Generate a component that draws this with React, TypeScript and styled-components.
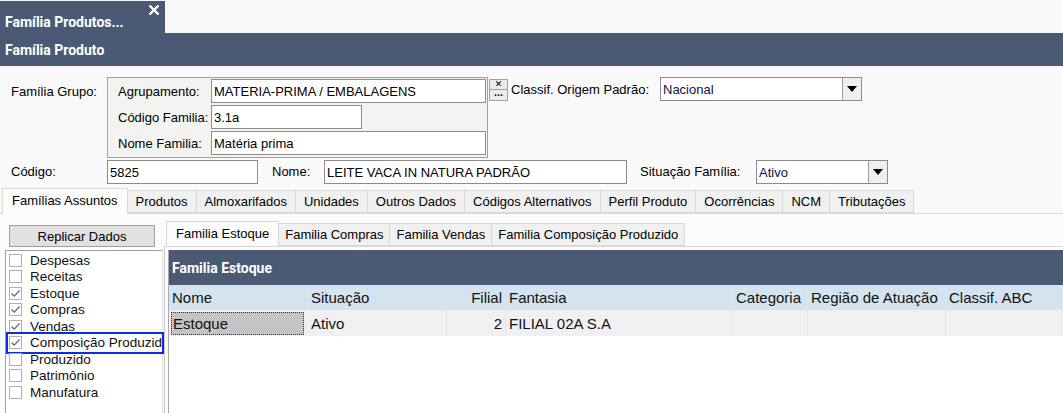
import styled, { createGlobalStyle } from 'styled-components';

const GlobalStyle = createGlobalStyle`
  body {
    margin: 0;
    background: #f9f9f9;
    font-family: 'Liberation Sans', Arial, sans-serif;
    font-size: 13px;
    color: #000;
  }
  * { box-sizing: border-box; }
`;

const DARK = '#4b5a74';

const Screen = styled.div`
  width: 1063px;
  height: 413px;
  overflow: hidden;
  display: flex;
  flex-direction: column;
`;

const DocTabs = styled.div`
  height: 33px;
  display: flex;
  align-items: flex-end;
`;

const DocTab = styled.div`
  width: 165px;
  height: 32px;
  display: flex;
  align-items: flex-start;
  padding: 0 4px 0 5px;
  background: ${DARK};
  color: #fff;
  font: 700 14px Roboto, 'Liberation Sans', sans-serif;
`;

const DocTabText = styled.span`
  margin-top: 13px;
`;

const CloseIcon = styled.svg`
  margin: 3px 1px 0 auto;
`;

const TitleBar = styled.div`
  height: 33px;
  display: flex;
  align-items: center;
  padding-left: 5px;
  background: ${DARK};
  color: #fff;
  font: 700 14px Roboto, 'Liberation Sans', sans-serif;
`;

const Form = styled.div`
  display: flex;
  flex-direction: column;
  gap: 2px;
  padding: 11px 0 0 11px;
`;

const Row = styled.div`
  display: flex;
  align-items: flex-start;
`;

const Label = styled.span<{ w: number; ml?: number; mt?: number }>`
  width: ${(p) => p.w}px;
  margin-left: ${(p) => p.ml ?? 0}px;
  margin-top: ${(p) => p.mt ?? 4}px;
  line-height: 15px;
  white-space: nowrap;
`;

const GroupBox = styled.div`
  width: 381px;
  display: grid;
  grid-template-columns: 93px auto;
  align-items: center;
  row-gap: 2px;
  padding: 1px 0 2px 10px;
  border: 1px solid #a0a0a0;
  background: #f3f3f1;
`;

const Input = styled.div<{ w: number }>`
  width: ${(p) => p.w}px;
  height: 24px;
  display: flex;
  align-items: center;
  padding-left: 2px;
  border: 1px solid #8c8c8c;
  background: #fff;
  white-space: nowrap;
  overflow: hidden;
`;

const MiniButtons = styled.div`
  display: flex;
  flex-direction: column;
  width: 19px;
  margin: 2px 0 0 1px;
`;

const MiniButton = styled.div`
  height: 11px;
  display: flex;
  align-items: center;
  justify-content: center;
  border: 1px solid #a0a0a0;
  background: #ececec;
  font: 700 9px 'DejaVu Sans', sans-serif;
  line-height: 1;
  & + & {
    border-top: none;
    height: 11px;
    align-items: flex-end;
    padding-bottom: 2px;
    font-size: 8px;
  }
`;

const Combo = styled.div<{ w: number }>`
  width: ${(p) => p.w}px;
  height: 24px;
  display: flex;
  border: 1px solid #8c8c8c;
  background: #fff;
`;

const ComboText = styled.span`
  flex: 1;
  padding: 4px 0 0 2px;
  color: #10104a;
`;

const ComboArrow = styled.span`
  width: 19px;
  display: flex;
  align-items: center;
  justify-content: center;
  border-left: 1px solid #a0a0a0;
  background: #f0f0f0;
  &::after {
    content: '';
    border-left: 5px solid transparent;
    border-right: 5px solid transparent;
    border-top: 6px solid #000;
  }
`;

const TabRow = styled.div`
  display: flex;
  align-items: flex-end;
  height: 30px;
  padding-left: 2px;
  border-bottom: 1px solid #d9d9d9;
`;

const Tab = styled.div<{ active?: boolean; pad?: number }>`
  height: ${(p) => (p.active ? 26 : 23)}px;
  display: flex;
  align-items: center;
  padding: ${(p) => (p.active ? '0 9px 2px' : `0 ${p.pad ?? 5}px`)};
  margin-bottom: ${(p) => (p.active ? -1 : 0)}px;
  border: 1px solid #d9d9d9;
  border-left: ${(p) => (p.active ? '1px solid #d9d9d9' : 'none')};
  border-bottom: ${(p) => (p.active ? 'none' : '1px solid #d9d9d9')};
  background: ${(p) => (p.active ? '#fcfcfc' : '#f0f0f0')};
  white-space: nowrap;
`;

const TabBody = styled.div`
  flex: 1;
  display: flex;
  background: #fcfcfc;
  padding-left: 5px;
`;

const LeftPanel = styled.div`
  width: 158px;
  display: flex;
  flex-direction: column;
`;

const Button = styled.div`
  width: 146px;
  height: 22px;
  margin: 11px 0 3px 4px;
  display: flex;
  align-items: center;
  justify-content: center;
  border: 1px solid #a0a0a0;
  background: #e1e1e1;
`;

const CheckList = styled.div`
  flex: 1;
  padding: 1px 0 0 3px;
  border-left: 1px solid #a0a0a0;
  border-top: 1px solid #a0a0a0;
  border-right: 1px solid #e3e3e3;
  background: #fff;
`;

const CheckItem = styled.div<{ focused?: boolean }>`
  position: relative;
  height: 16.5px;
  display: flex;
  align-items: center;
  gap: 8px;
  font-size: 13.5px;
  color: #111;
  white-space: nowrap;
  ${(p) =>
    p.focused &&
    `&::after {
      content: '';
      position: absolute;
      left: -3px;
      right: -2px;
      top: -3px;
      bottom: -3px;
      border: 2px solid #0a2fe0;
    }`}
`;

const Box = styled.span`
  width: 13px;
  height: 13px;
  display: flex;
  align-items: center;
  justify-content: center;
  border: 1px solid #b0b0b0;
  background: #fff;
`;

const RightPanel = styled.div`
  flex: 1;
  display: flex;
  flex-direction: column;
  padding: 6px 0 0 1px;
`;

const InnerTabRow = styled.div`
  display: flex;
  align-items: flex-end;
  height: 26px;
  padding-left: 2px;
`;

const InnerPage = styled.div`
  flex: 1;
  padding: 3px 0 0 3px;
  border-left: 1px solid #c8c8c8;
  border-top: 1px solid #d9d9d9;
`;

const Panel = styled.div`
  border-left: 1px solid #a9a9a9;
  height: 100%;
  background: #fff;
`;

const PanelHeader = styled.div`
  height: 35px;
  display: flex;
  align-items: center;
  padding-left: 3px;
  background: ${DARK};
  color: #fff;
  font: 700 14px Roboto, 'Liberation Sans', sans-serif;
`;

const GridRow = styled.div<{ head?: boolean }>`
  display: grid;
  grid-template-columns: 139px 139px 59px 227px 75px 138px 1fr;
  height: ${(p) => (p.head ? 25 : 26)}px;
  background: ${(p) => (p.head ? '#d4e3f0' : '#f0f0f2')};
  font-size: 15px;
  color: #111;
`;

const Cell = styled.div<{ right?: boolean; head?: boolean }>`
  display: flex;
  align-items: center;
  justify-content: ${(p) => (p.right ? 'flex-end' : 'flex-start')};
  padding: 0 3px;
  border-right: 1px solid ${(p) => (p.head ? '#dde7f1' : '#e8e8ea')};
  white-space: nowrap;
  overflow: hidden;
`;

const SelectedCell = styled(Cell)`
  margin: 2px 4px 1px 2px;
  padding-left: 1px;
  background: #c4c4c4;
  border: 1px dotted #333;
`;

const Check = () => (
  <svg width="11" height="11" viewBox="0 0 11 11">
    <polyline points="1.5,5.5 4.2,8.2 9.5,2.5" fill="none" stroke="#666" strokeWidth="1.2" />
  </svg>
);

const mainTabs = [
  'Produtos',
  'Almoxarifados',
  'Unidades',
  'Outros Dados',
  'Códigos Alternativos',
  'Perfil Produto',
  'Ocorrências',
  'NCM',
  'Tributações',
];

const innerTabs = ['Familia Compras', 'Familia Vendas', 'Familia Composição Produzido'];

const items: { label: string; checked?: boolean; focused?: boolean }[] = [
  { label: 'Despesas' },
  { label: 'Receitas' },
  { label: 'Estoque', checked: true },
  { label: 'Compras', checked: true },
  { label: 'Vendas', checked: true },
  { label: 'Composição Produzid', checked: true, focused: true },
  { label: 'Produzido' },
  { label: 'Patrimônio' },
  { label: 'Manufatura' },
];

export default function App() {
  return (
    <Screen>
      <GlobalStyle />
      <DocTabs>
        <DocTab>
          <DocTabText>Família Produtos...</DocTabText>
          <CloseIcon width="12" height="12" viewBox="0 0 12 12">
            <path d="M1.5 1.5 L10.5 10.5 M10.5 1.5 L1.5 10.5" stroke="#fff" strokeWidth="2.4" />
          </CloseIcon>
        </DocTab>
      </DocTabs>
      <TitleBar>Família Produto</TitleBar>

      <Form>
        <Row>
          <Label w={96} mt={7}>Família Grupo:</Label>
          <GroupBox>
            <Label w={93} mt={0}>Agrupamento:</Label>
            <Input w={275}>MATERIA-PRIMA / EMBALAGENS</Input>
            <Label w={93} mt={0}>Código Familia:</Label>
            <Input w={151}>3.1a</Input>
            <Label w={93} mt={0}>Nome Familia:</Label>
            <Input w={275}>Matéria prima</Input>
          </GroupBox>
          <MiniButtons>
            <MiniButton>✕</MiniButton>
            <MiniButton>...</MiniButton>
          </MiniButtons>
          <Label w={149} ml={3} mt={5}>Classif. Origem Padrão:</Label>
          <Combo w={202}>
            <ComboText>Nacional</ComboText>
            <ComboArrow />
          </Combo>
        </Row>
        <Row>
          <Label w={96}>Código:</Label>
          <Input w={151}>5825</Input>
          <Label w={52} ml={14}>Nome:</Label>
          <Input w={303}>LEITE VACA IN NATURA PADRÃO</Input>
          <Label w={116} ml={13}>Situação Família:</Label>
          <Combo w={132}>
            <ComboText>Ativo</ComboText>
            <ComboArrow />
          </Combo>
        </Row>
      </Form>

      <TabRow>
        <Tab active>Famílias Assuntos</Tab>
        {mainTabs.map((t) => (
          <Tab key={t} pad={8}>
            {t}
          </Tab>
        ))}
      </TabRow>

      <TabBody>
        <LeftPanel>
          <Button>Replicar Dados</Button>
          <CheckList>
            {items.map((it) => (
              <CheckItem key={it.label} focused={it.focused}>
                <Box>{it.checked && <Check />}</Box>
                {it.label}
              </CheckItem>
            ))}
          </CheckList>
        </LeftPanel>

        <RightPanel>
          <InnerTabRow>
            <Tab active>Familia Estoque</Tab>
            {innerTabs.map((t) => (
              <Tab key={t} pad={6}>
                {t}
              </Tab>
            ))}
          </InnerTabRow>
          <InnerPage>
            <Panel>
              <PanelHeader>Familia Estoque</PanelHeader>
              <GridRow head>
                <Cell head>Nome</Cell>
                <Cell head>Situação</Cell>
                <Cell head right>Filial</Cell>
                <Cell head>Fantasia</Cell>
                <Cell head>Categoria</Cell>
                <Cell head>Região de Atuação</Cell>
                <Cell head>Classif. ABC</Cell>
              </GridRow>
              <GridRow>
                <SelectedCell>Estoque</SelectedCell>
                <Cell>Ativo</Cell>
                <Cell right>2</Cell>
                <Cell>FILIAL 02A S.A</Cell>
                <Cell />
                <Cell />
                <Cell />
              </GridRow>
            </Panel>
          </InnerPage>
        </RightPanel>
      </TabBody>
    </Screen>
  );
}
